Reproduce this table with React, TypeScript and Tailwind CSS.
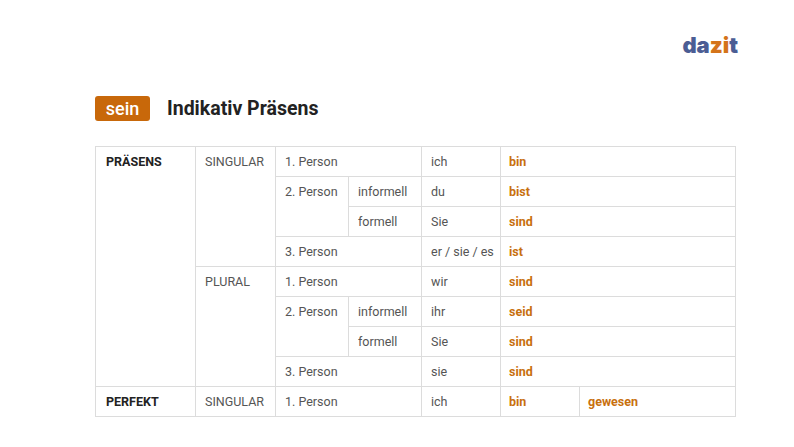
import React from "react";

const cell = "border border-[#dcdcdc] h-[30px] px-[9px] pt-[6px] pb-0 align-top text-left text-[12.5px] leading-[18px] font-normal text-[#555] whitespace-nowrap";
const head = "border border-[#dcdcdc] h-[30px] px-[10px] pt-[6px] pb-0 align-top text-left text-[12.5px] leading-[18px] font-bold text-[#222] whitespace-nowrap";
const verb = "border border-[#dcdcdc] h-[30px] px-[8px] pt-[6px] pb-0 align-top text-left text-[12.5px] leading-[18px] font-bold text-[#c8700e] whitespace-nowrap";

export default function App() {
  return (
    <div className="w-[794px] h-[447px] bg-white" style={{ fontFamily: "Roboto, 'Liberation Sans', sans-serif" }}>
      <div className="flex justify-end pr-[56px] pt-[31px]">
        <div className="text-[22px] font-black leading-[28px] tracking-[0px]" style={{ fontFamily: "Inter, sans-serif" }}>
          <span className="text-[#4b5d94]">da</span>
          <span className="text-[#d4741a]">zi</span>
          <span className="text-[#4b5d94]">t</span>
        </div>
      </div>
      <div className="flex items-center gap-[17px] pl-[95px] mt-[37px]">
        <div className="w-[55px] h-[25px] rounded-[3px] bg-[#c8680a] text-white text-[18px] font-medium flex items-center justify-center leading-none">sein</div>
        <div className="text-[19.5px] font-bold text-[#222] leading-none">Indikativ Präsens</div>
      </div>
      <div className="pl-[95px] mt-[25px]">
        <table className="border-collapse w-[640px] table-fixed">
          <colgroup>
            <col className="w-[100px]" />
            <col className="w-[80px]" />
            <col className="w-[73px]" />
            <col className="w-[73px]" />
            <col className="w-[79px]" />
            <col className="w-[79px]" />
            <col className="w-[156px]" />
          </colgroup>
          <tbody>
            <tr>
              <td rowSpan={8} className={head}>PRÄSENS</td>
              <td rowSpan={4} className={cell}>SINGULAR</td>
              <td colSpan={2} className={cell}>1. Person</td>
              <td className={cell}>ich</td>
              <td colSpan={2} className={verb}>bin</td>
            </tr>
            <tr>
              <td rowSpan={2} className={cell}>2. Person</td>
              <td className={cell}>informell</td>
              <td className={cell}>du</td>
              <td colSpan={2} className={verb}>bist</td>
            </tr>
            <tr>
              <td className={cell}>formell</td>
              <td className={cell}>Sie</td>
              <td colSpan={2} className={verb}>sind</td>
            </tr>
            <tr>
              <td colSpan={2} className={cell}>3. Person</td>
              <td className={cell}>er / sie / es</td>
              <td colSpan={2} className={verb}>ist</td>
            </tr>
            <tr>
              <td rowSpan={4} className={cell}>PLURAL</td>
              <td colSpan={2} className={cell}>1. Person</td>
              <td className={cell}>wir</td>
              <td colSpan={2} className={verb}>sind</td>
            </tr>
            <tr>
              <td rowSpan={2} className={cell}>2. Person</td>
              <td className={cell}>informell</td>
              <td className={cell}>ihr</td>
              <td colSpan={2} className={verb}>seid</td>
            </tr>
            <tr>
              <td className={cell}>formell</td>
              <td className={cell}>Sie</td>
              <td colSpan={2} className={verb}>sind</td>
            </tr>
            <tr>
              <td colSpan={2} className={cell}>3. Person</td>
              <td className={cell}>sie</td>
              <td colSpan={2} className={verb}>sind</td>
            </tr>
            <tr>
              <td className={head}>PERFEKT</td>
              <td className={cell}>SINGULAR</td>
              <td colSpan={2} className={cell}>1. Person</td>
              <td className={cell}>ich</td>
              <td className={verb}>bin</td>
              <td className={verb}>gewesen</td>
            </tr>
          </tbody>
        </table>
      </div>
    </div>
  );
}
